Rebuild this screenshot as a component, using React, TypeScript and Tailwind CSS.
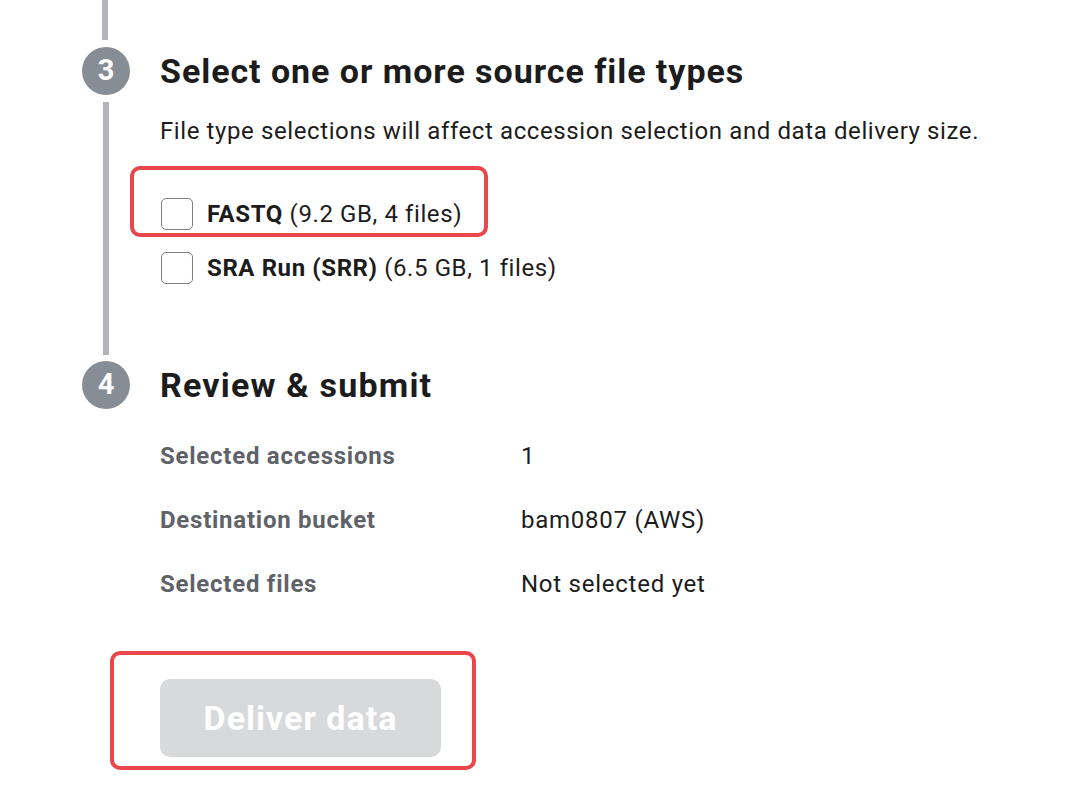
import React from "react";

const lineColor = "bg-[#b2b4b9]";

const StepCircle = ({ n }: { n: number }) => (
  <div className="h-12 w-12 shrink-0 rounded-full bg-[#878d95] text-white font-bold text-[29px] flex items-center justify-center">
    {n}
  </div>
);

const FileOption = ({
  name,
  detail,
  highlight,
}: {
  name: string;
  detail: string;
  highlight?: boolean;
}) => (
  <label className="relative flex items-center h-8 gap-[14px] ml-px">
    {highlight && (
      <div className="absolute left-[-31px] top-[-32px] w-[358px] h-[71px] border-4 border-[#e8474c] rounded-[10px] pointer-events-none"></div>
    )}
    <span className="w-8 h-8 rounded-[5px] border-[1.5px] border-[#7f7f7f] bg-white"></span>
    <span className="text-[24px] tracking-[0.6px] text-[#1c1c1c]">
      <b className="font-bold">{name}</b> {detail}
    </span>
  </label>
);

const SummaryRow = ({ label, value }: { label: string; value: string }) => (
  <div className="flex items-center h-16 text-[24px] tracking-[0.75px]">
    <div className="w-[361px] font-bold text-[#5f6369]">{label}</div>
    <div className="text-[#1c1c1c]">{value}</div>
  </div>
);

export default function App() {
  return (
    <div className="min-h-screen bg-white font-['Roboto',sans-serif] text-[#1c1c1c]">
      <div className={`ml-[102px] w-[6px] h-[40px] ${lineColor}`}></div>

      <div className="flex mt-[7px]">
        <div className="ml-[82px] w-12 flex flex-col items-center">
          <StepCircle n={3} />
          <div className={`mt-[7px] w-[6px] flex-1 ${lineColor}`}></div>
        </div>
        <div className="ml-[30px] flex-1 pb-[71px]">
          <h2 className="h-12 leading-[48px] text-[34px] font-bold tracking-[0.95px]">
            Select one or more source file types
          </h2>
          <p className="mt-[20px] leading-8 text-[24px] tracking-[0.6px] whitespace-nowrap">
            File type selections will affect accession selection and data delivery size.
          </p>
          <div className="mt-[51px] flex flex-col gap-[22px]">
            <FileOption name="FASTQ" detail="(9.2 GB, 4 files)" highlight />
            <FileOption name="SRA Run (SRR)" detail="(6.5 GB, 1 files)" />
          </div>
        </div>
      </div>

      <div className="flex mt-[6px]">
        <div className="ml-[82px] w-12 flex flex-col items-center">
          <StepCircle n={4} />
        </div>
        <div className="ml-[30px] flex-1">
          <h2 className="h-12 leading-[48px] text-[34px] font-bold tracking-[1.2px]">
            Review &amp; submit
          </h2>
          <div className="mt-[15px]">
            <SummaryRow label="Selected accessions" value="1" />
            <SummaryRow label="Destination bucket" value="bam0807 (AWS)" />
            <SummaryRow label="Selected files" value="Not selected yet" />
          </div>
          <div className="relative mt-[63px] w-[281px]">
            <div className="absolute left-[-50px] top-[-28px] w-[366px] h-[119px] border-4 border-[#e8474c] rounded-[10px] pointer-events-none"></div>
            <button
              disabled
              className="w-[281px] h-[78px] rounded-[10px] bg-[#d8d9db] text-white text-[34px] tracking-[1px] font-bold"
            >
              Deliver data
            </button>
          </div>
        </div>
      </div>
    </div>
  );
}
